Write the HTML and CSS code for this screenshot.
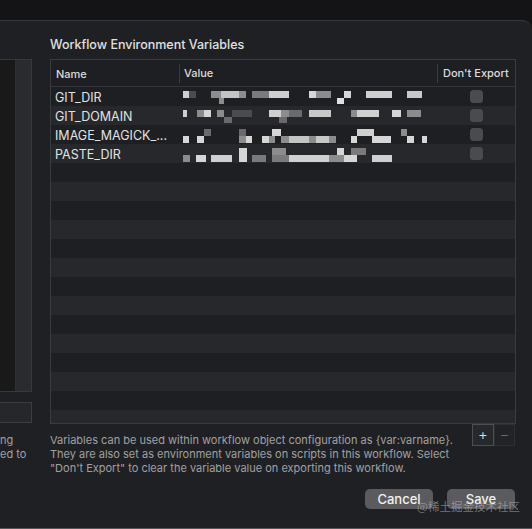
FILE: index.html
```html
<!DOCTYPE html>
<html>
<head>
<meta charset="utf-8">
<link rel="stylesheet" href="styles.css">
</head>
<body>
<div class="topbar"></div>
<div class="sheet">
  <div class="side">
    <div class="side-box"><div class="side-list"></div><div class="side-scroll"></div></div>
    <div class="side-field"></div>
    <p class="side-text">ng<br>ed to</p>
  </div>
  <div class="main">
    <h1 class="title">Workflow Environment Variables</h1>
    <div class="table">
      <div class="thead">
        <div class="c-name">Name</div>
        <div class="c-value sep">Value</div>
        <div class="c-exp sep">Don't Export</div>
      </div>
      <div class="tbody">
        <div class="row"><div class="c-name">GIT_DIR</div><div class="c-value"><div class="mosaic m1"></div></div><div class="c-exp"><span class="check"></span></div></div>
        <div class="row"><div class="c-name">GIT_DOMAIN</div><div class="c-value"><div class="mosaic m2"></div></div><div class="c-exp"><span class="check"></span></div></div>
        <div class="row"><div class="c-name">IMAGE_MAGICK_...</div><div class="c-value"><div class="mosaic m3"></div></div><div class="c-exp"><span class="check"></span></div></div>
        <div class="row"><div class="c-name">PASTE_DIR</div><div class="c-value"><div class="mosaic m4"></div></div><div class="c-exp"><span class="check"></span></div></div>
        <div class="row"></div><div class="row"></div><div class="row"></div><div class="row"></div>
        <div class="row"></div><div class="row"></div><div class="row"></div><div class="row"></div>
        <div class="row"></div><div class="row"></div><div class="row"></div><div class="row"></div>
        <div class="row"></div><div class="row"></div>
      </div>
    </div>
    <div class="below">
      <p class="desc">Variables can be used within workflow object configuration as {var:varname}.<br>They are also set as environment variables on scripts in this workflow. Select<br>"Don't Export" to clear the variable value on exporting this workflow.</p>
      <div class="pm"><button class="pm-btn plus">+</button><button class="pm-btn minus">−</button></div>
    </div>
    <div class="actions"><button class="btn">Cancel</button><button class="btn">Save</button></div>
  </div>
  <div class="watermark">@稀土掘金技术社区</div>
</div>
</body>
</html>
```

FILE: styles.css
```css
* { box-sizing: border-box; }
html, body { margin: 0; padding: 0; }
body {
  width: 532px; height: 529px; overflow: hidden;
  background: #141416;
  font-family: Inter, "Noto Sans", sans-serif;
  color: #dedede;
}
.topbar { height: 20px; background: #141416; }
.sheet {
  position: relative;
  height: 509px;
  background: #1f2023;
  border-top: 1px solid #38383b;
  border-bottom: 1px solid #55565a;
  border-top-right-radius: 10px;
  display: flex;
}
.side { width: 32px; flex: none; padding-top: 38px; }
.side-box {
  height: 333px; display: flex;
  border: 1px solid #37383b; border-left: none;
}
.side-list { width: 16px; background: #19191a; border-right: 1px solid #2f3033; }
.side-scroll { flex: 1; background: #2a2b2e; }
.side-field {
  margin-top: 10px; height: 21px;
  border: 1px solid #3c3d40; border-left: none;
  background: #26272a;
}
.side-text {
  margin: 11px 0 0; font-size: 11px; line-height: 13.5px;
  color: #a0a0a2; white-space: nowrap;
}
.main { margin-left: 18px; width: 466px; padding-top: 16px; flex: none; }
.title {
  margin: 0 0 6px; font-size: 12.5px; line-height: 16px; font-weight: 500;
  color: #e0e0e0;
}
.table {
  height: 365px; border: 1px solid #3a3b3e; background: #1e1f22;
  display: flex; flex-direction: column; overflow: hidden;
}
.thead {
  height: 27px; flex: none; display: flex; align-items: center;
  border-bottom: 1px solid #343539;
  font-size: 11px; font-weight: 500; color: #dcdcdc;
  padding-top: 1px;
}
.c-name { width: 128px; padding-left: 4px; flex: none; white-space: nowrap; }
.c-value { width: 258px; padding-left: 4px; flex: none; }
.c-exp { width: 78px; padding-left: 5px; flex: none; white-space: nowrap; }
.thead .c-name { padding-left: 5px; }
.thead .sep { border-left: 1px solid #3a3b3e; line-height: 19px; }
.thead .c-value { padding-left: 4px; }
.tbody { flex: 1; overflow: hidden; }
.row {
  height: 19px; display: flex; align-items: center;
  background: #1e1f22; font-size: 12.5px; color: #e2e2e2;
}
.row:nth-child(even) { background: #27282b; }
.row .c-name { padding-top: 2px; }
.row .c-value { padding-left: 4px; }
.row .c-exp { display: flex; justify-content: center; padding-left: 0; }
.check {
  width: 13px; height: 13px; border-radius: 3.5px; background: #4a4b4e;
}
.mosaic { width: 250px; height: 14px; margin-top: 2px; }
.m1 {
  background:
    linear-gradient(90deg, #cfcfcf 0 6px, #4c4c50 6px 13px, transparent 13px 28px, #8c8c8c 28px 38px, #c4c4c4 38px 56px, #8c8c8c 56px 63px, transparent 63px 69px, #7a7a7c 69px 86px, #cfcfcf 86px 106px, transparent 106px 126px, #d6d6d6 126px 133px, #8c8c8c 133px 148px, transparent 148px 161px, #d6d6d6 161px 168px, transparent 168px 183px, #cfcfcf 183px 209px, transparent 209px 224px, #c8c8c8 224px 239px, transparent 239px) 0 0 / 100% 7px no-repeat,
    linear-gradient(90deg, transparent 0 36px, #8c8c8c 36px 41px, transparent 41px 154px, #e0e0e0 154px 161px, transparent 161px) 0 7px / 100% 6px no-repeat;
}
.m2 {
  background:
    linear-gradient(90deg, #cfcfcf 0 4px, transparent 4px 14px, #8c8c8c 14px 21px, #d6d6d6 21px 28px, transparent 28px 34px, #8c8c8c 34px 41px, transparent 41px 49px, #4c4c50 49px 69px, transparent 69px 86px, #cfcfcf 86px 98px, #8c8c8c 98px 106px, #6a6a6c 106px 119px, transparent 119px 126px, #c8c8c8 126px 148px, transparent 148px 168px, #8c8c8c 168px 174px, #d0d0d0 174px 196px, transparent 196px 209px, #d6d6d6 209px 218px, transparent 218px 224px, #8c8c8c 224px 238px, transparent 238px) 0 0 / 100% 7px no-repeat,
    linear-gradient(90deg, transparent 0 41px, #6a6a6c 41px 49px, transparent 49px 96px, #6a6a6c 96px 104px, transparent 104px) 0 7px / 100% 6px no-repeat;
}
.m3 {
  background:
    linear-gradient(90deg, transparent 0 21px, #6a6a6c 21px 28px, transparent 28px 56px, #6a6a6c 56px 63px, transparent 63px 89px, #d6d6d6 89px 98px, transparent 98px 174px, #cfcfcf 174px 191px, transparent 191px 218px, #8c8c8c 218px 224px, transparent 224px) 0 0 / 100% 7px no-repeat,
    linear-gradient(90deg, #d6d6d6 0 6px, transparent 6px 14px, #d6d6d6 14px 21px, transparent 21px 56px, #8c8c8c 56px 63px, #d6d6d6 63px 69px, transparent 69px 79px, #d6d6d6 79px 86px, #8c8c8c 86px 92px, transparent 92px 98px, #8c8c8c 98px 106px, #c4c4c4 106px 126px, #8c8c8c 126px 133px, #c8c8c8 133px 146px, #8c8c8c 146px 153px, transparent 153px 168px, #d6d6d6 168px 174px, transparent 174px 189px, #d6d6d6 189px 208px, transparent 208px 224px, #d6d6d6 224px 231px, transparent 231px 239px, #d6d6d6 239px 244px, transparent 244px) 0 7px / 100% 7px no-repeat;
}
.m4 {
  background:
    linear-gradient(90deg, transparent 0 56px, #d6d6d6 56px 64px, transparent 64px 89px, #8c8c8c 89px 103px, transparent 103px 154px, #d6d6d6 154px 161px, transparent 161px 168px, #7a7a7c 168px 183px, transparent 183px) 0 0 / 100% 7px no-repeat,
    linear-gradient(90deg, #8c8c8c 0 7px, transparent 7px 13px, #d6d6d6 13px 23px, transparent 23px 28px, #cfcfcf 28px 49px, transparent 49px 56px, #d6d6d6 56px 64px, transparent 64px 69px, #7a7a7c 69px 83px, transparent 83px 89px, #7a7a7c 89px 106px, #d0d0d0 106px 146px, #8c8c8c 146px 161px, #d6d6d6 161px 174px, transparent 174px 189px, #cfcfcf 189px 209px, transparent 209px) 0 7px / 100% 7px no-repeat;
}
.below { display: flex; align-items: flex-start; height: 51px; }
.desc {
  flex: 1; margin: 9px 0 0; font-size: 11px; line-height: 14px;
  color: #a0a0a2; white-space: nowrap;
}
.pm { display: flex; flex: none; margin-right: 1px; }
.pm-btn {
  width: 22px; height: 22px; padding: 0; margin: 0;
  font-family: Inter, sans-serif; font-size: 15px; font-weight: 300; line-height: 18px;
  background: #27282b; color: #e0e0e0; border: 1px solid #4d4e52;
}
.pm-btn.minus { width: 21px; color: #6c6c6f; border-color: #2e2f33; background: #222326; }
.actions {
  margin-top: 14px; display: flex; justify-content: flex-end; gap: 14px;
  padding-right: 1px;
}
.btn {
  width: 68px; height: 20px; padding: 0; border: none; border-radius: 5px;
  background: #5b5b5e; color: #f2f2f2;
  font-family: Inter, sans-serif; font-size: 13px; font-weight: 500; line-height: 20px;
}
.watermark {
  position: absolute; left: 417px; top: 477px;
  font-family: "Noto Sans CJK SC", sans-serif; font-size: 11.5px; line-height: 16px;
  color: rgba(190, 190, 192, 0.55); white-space: nowrap;
}
```
